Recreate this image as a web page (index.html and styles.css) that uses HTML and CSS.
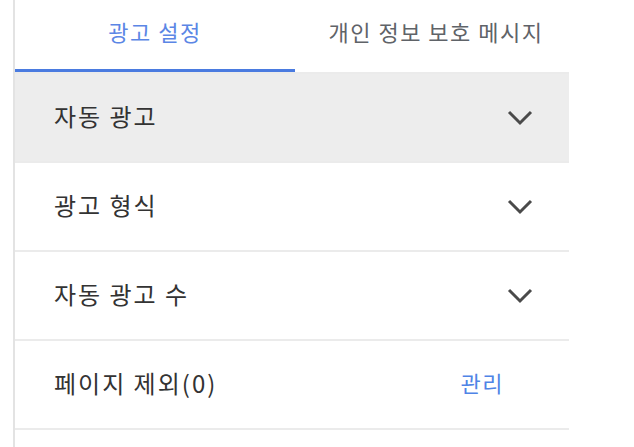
FILE: index.html
```html
<!DOCTYPE html>
<html>
<head>
    <meta charset="UTF-8">
    <title>광고 설정</title>
    <link rel="stylesheet" href="styles.css">
</head>
<body>
    <div class="panel">
        <div class="tabs">
            <div class="tab active">광고 설정</div>
            <div class="tab">개인 정보 보호 메시지</div>
        </div>

        <div class="row open">
            <span class="label">자동 광고</span>
            <svg class="chevron" width="26" height="16" viewBox="0 0 26 16">
                <polyline points="2,2 13,13 24,2" />
            </svg>
        </div>
        <div class="row">
            <span class="label">광고 형식</span>
            <svg class="chevron" width="26" height="16" viewBox="0 0 26 16">
                <polyline points="2,2 13,13 24,2" />
            </svg>
        </div>
        <div class="row">
            <span class="label">자동 광고 수</span>
            <svg class="chevron" width="26" height="16" viewBox="0 0 26 16">
                <polyline points="2,2 13,13 24,2" />
            </svg>
        </div>
        <div class="row">
            <span class="label">페이지 제외(0)</span>
            <a class="manage" href="#">관리</a>
        </div>
        <div class="row"></div>
    </div>
</body>
</html>
```

FILE: styles.css
```css
body {
    margin: 0;
    background: #fff;
    font-family: "Noto Sans CJK KR", "Noto Sans", sans-serif;
    overflow: hidden;
}

.panel {
    margin-left: 13px;
    width: 554px;
    height: 447px;
    overflow: hidden;
    border-left: 2px solid #e3e3e3;
}

.tabs {
    display: flex;
    height: 72px;
    border-bottom: 2px solid #ebebeb;
}

.tab {
    display: flex;
    align-items: center;
    justify-content: center;
    font-size: 22px;
    letter-spacing: 1.5px;
    color: #5f6368;
    padding-bottom: 10px;
    box-sizing: border-box;
}

.tab:first-child {
    width: 280px;
}

.tab:last-child {
    flex: 1;
    padding-left: 8px;
}

.tab.active {
    color: #5b86e5;
    border-bottom: 3px solid #4a7be0;
    padding-bottom: 7px;
}

.row {
    display: flex;
    align-items: center;
    justify-content: space-between;
    height: 87px;
    padding: 0 36px 0 39px;
    border-bottom: 2px solid #ebebeb;
}

.row.open {
    background: #ededed;
}

.label {
    font-size: 24px;
    letter-spacing: 2px;
    color: #333;
    padding-bottom: 5px;
}

.chevron polyline {
    fill: none;
    stroke: #4a4a4a;
    stroke-width: 3;
}

.manage {
    font-size: 22px;
    letter-spacing: 1.5px;
    color: #4f84e6;
    text-decoration: none;
    margin-right: 29px;
    padding-bottom: 5px;
}
```
